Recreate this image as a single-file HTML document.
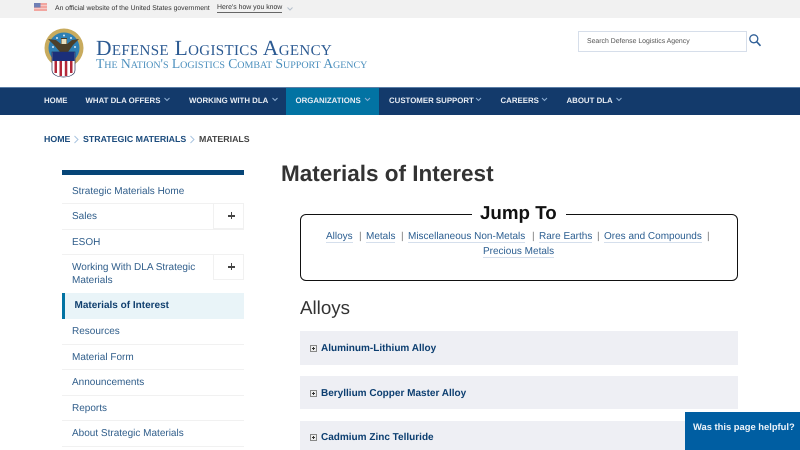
<!DOCTYPE html>
<html lang="en">
<head>
<meta charset="utf-8">
<style>
html,body{margin:0;padding:0}
body{width:800px;height:450px;position:relative;overflow:hidden;background:#fff;font-family:"Liberation Sans",Arial,sans-serif;text-rendering:geometricPrecision}
.a{position:absolute;white-space:nowrap}
a{color:inherit;text-decoration:none}
.nav{font-weight:bold;font-size:7.850px;color:#e8edf4;top:95px;line-height:11px}
.side{font-size:10px;color:#2f5d8a;left:72px;line-height:14px}
.line{position:absolute;left:62px;width:182px;height:1px;background:#f1f1f1}
.acc{position:absolute;left:300px;width:438px;background:#eeeff4}
.acc b{position:absolute;left:21px;font-size:10px;color:#0c3e70;white-space:nowrap;line-height:14px}
.acc i{position:absolute;left:10px;width:5px;height:5px;border:1px solid #888;background:#eee}
.acc i:after{content:"";position:absolute;left:1px;top:2px;width:3px;height:1px;background:#333}
.acc i:before{content:"";position:absolute;left:2px;top:1px;width:1px;height:3px;background:#333}
.plus{position:absolute;left:213px;width:31px;height:26px;border:1px solid #f1f1f1;box-sizing:border-box}
.plus:before{content:"";position:absolute;left:14px;top:11px;width:7px;height:1.6px;background:#444}
.plus:after{content:"";position:absolute;left:16.7px;top:8.3px;width:1.6px;height:7px;background:#444}
.j{color:#2a5d90;border-bottom:1px solid #d5dfec}
.l{font-size:10px;line-height:15px;top:229px}
.sep{color:#777}
.bc{top:133px;font-size:8.800px;line-height:12px;font-weight:bold;color:#1a4a7c}
</style>
</head>
<body>
<div class="a" style="left:0;top:0;width:800px;height:18px;background:#f1f1f1"></div>
<svg class="a" style="left:34px;top:3px" width="13" height="8" viewBox="0 0 13 8"><rect width="13" height="8" fill="#f2a6a0"/><rect y="2" width="13" height="1" fill="#f7c9c5"/><rect y="5" width="13" height="1" fill="#f7c9c5"/><rect width="6.500" height="4.500" fill="#6f7fb5"/></svg>
<div class="a" style="left:55px;top:4px;font-size:6.850px;line-height:10px;color:#333">An official website of the United States government</div>
<div class="a" style="left:217px;top:4px;font-size:6.900px;line-height:8px;color:#333;border-bottom:1px solid #666;height:8px">Here's how you know</div>
<svg class="a" style="left:287px;top:7px" width="6" height="4" viewBox="0 0 6 4"><path d="M.5.5 3 3 5.500.5" fill="none" stroke="#b4bfcc" stroke-width="1"/></svg>

<svg class="a" style="left:40px;top:25px" width="48" height="56" viewBox="0 0 48 56">
<circle cx="24" cy="23" r="19.500" fill="#c8ab5e"/>
<circle cx="24" cy="23" r="15.500" fill="#2f80b5"/>
<g fill="#dce9f2"><circle cx="17" cy="13" r="1"/><circle cx="24" cy="10.500" r="1"/><circle cx="31" cy="13" r="1"/><circle cx="13" cy="22" r="1"/><circle cx="35" cy="22" r="1"/><circle cx="14" cy="29" r="1"/><circle cx="34" cy="29" r="1"/><circle cx="19" cy="19" r="1"/><circle cx="29" cy="19" r="1"/></g>
<path d="M8 14 16 15 21 19 21 13 27 13 27 19 32 15 39 14 33 20 28 27 20 27 14 20z" fill="#4c3f2a"/>
<rect x="21.500" y="14" width="5" height="5" fill="#e9dfc0"/>
<path d="M12 27H35V45C35 50 29 52 23.500 52 18 52 12 50 12 45z" fill="#fff" stroke="#2a3358" stroke-width=".7"/>
<rect x="12.500" y="27" width="22" height="9" fill="#1b2f7a"/>
<path d="M14.500 36h2.500v12h-2.500zM19.500 36h2.500v15h-2.500zM24.800 36h2.500v15h-2.500zM30 36h2.500v12H30z" fill="#b3283a"/>
</svg>

<div class="a" style="left:96px;top:36.500px;font-family:'Liberation Serif',serif;font-size:21.500px;line-height:22px;color:#2c5a92;font-variant:small-caps;letter-spacing:.34px">Defense Logistics Agency</div>
<div class="a" style="left:96px;top:55.500px;font-family:'Liberation Serif',serif;font-size:13.600px;line-height:15px;color:#4b8fbd;font-variant:small-caps;letter-spacing:-.03px">The Nation's Logistics Combat Support Agency</div>

<div class="a" style="left:578px;top:31px;width:169px;height:21px;box-sizing:border-box;border:1px solid #d6deea;font-size:6.900px;line-height:19px;color:#555;padding-left:8px">Search Defense Logistics Agency</div>
<svg class="a" style="left:748px;top:33px" width="14" height="14" viewBox="0 0 14 14"><circle cx="5.800" cy="5.800" r="4" fill="none" stroke="#2f5f97" stroke-width="1.300"/><path d="M8.800 8.800 12.500 12.800" stroke="#2f5f97" stroke-width="1.600" fill="none"/></svg>

<div class="a" style="left:0;top:87px;width:800px;height:28px;background:#133a6b;border-top:1px solid #5b7ea6;box-sizing:border-box"></div>
<div class="a" style="left:286px;top:88px;width:93px;height:27px;background:#0273a3"></div>
<div class="a nav" style="left:44px">HOME</div>
<div class="a nav" style="left:85.500px">WHAT DLA OFFERS</div>
<div class="a nav" style="left:189px">WORKING WITH DLA</div>
<div class="a nav" style="left:295.500px">ORGANIZATIONS</div>
<div class="a nav" style="left:389px">CUSTOMER SUPPORT</div>
<div class="a nav" style="left:500.500px">CAREERS</div>
<div class="a nav" style="left:566.500px">ABOUT DLA</div>
<svg class="a" style="left:0;top:96px" width="800" height="8" viewBox="0 0 800 8"><g fill="none" stroke="#8fb0d4" stroke-width="1"><path d="M164.500 2 167 4.500 169.500 2M272.500 2 275 4.500 277.500 2M365 2 367.500 4.500 370 2M476 2 478.500 4.500 481 2M542 2 544.500 4.500 547 2M616.500 2 619 4.500 621.500 2"/></g></svg>

<div class="a bc" style="left:44px">HOME</div>
<svg class="a" style="left:73px;top:135px" width="7" height="9" viewBox="0 0 7 9"><path d="M1.500 1 5 4.500 1.500 8" fill="none" stroke="#a9c4e0" stroke-width="1"/></svg>
<div class="a bc" style="left:83px">STRATEGIC MATERIALS</div>
<svg class="a" style="left:189px;top:135px" width="7" height="9" viewBox="0 0 7 9"><path d="M1.500 1 5 4.500 1.500 8" fill="none" stroke="#a9c4e0" stroke-width="1"/></svg>
<div class="a bc" style="left:199px;color:#444">MATERIALS</div>

<div class="a" style="left:62px;top:170px;width:182px;height:5px;background:#064577"></div>
<div class="a side" style="top:184.500px"><a>Strategic Materials Home</a></div>
<div class="line" style="top:203px"></div>
<div class="a side" style="top:209.500px">Sales</div>
<div class="plus" style="top:203px"></div>
<div class="line" style="top:229px"></div>
<div class="a side" style="top:235.500px">ESOH</div>
<div class="line" style="top:254px"></div>
<div class="a side" style="top:261px;line-height:13px">Working With DLA Strategic<br>Materials</div>
<div class="plus" style="top:254px"></div>
<div class="a" style="left:62px;top:293px;width:182px;height:26px;background:#e9f4f8"></div>
<div class="a" style="left:62px;top:293px;width:3px;height:26px;background:#0273a3"></div>
<div class="a" style="left:74.500px;top:299px;font-size:10px;line-height:14px;font-weight:bold;color:#103f6e">Materials of Interest</div>
<div class="a side" style="top:325px">Resources</div>
<div class="line" style="top:344px"></div>
<div class="a side" style="top:350.500px">Material Form</div>
<div class="line" style="top:369px"></div>
<div class="a side" style="top:376px">Announcements</div>
<div class="line" style="top:395px"></div>
<div class="a side" style="top:401.500px">Reports</div>
<div class="line" style="top:420px"></div>
<div class="a side" style="top:427px">About Strategic Materials</div>
<div class="line" style="top:446px"></div>

<div class="a" style="left:281px;top:159.500px;font-size:22.500px;line-height:28px;font-weight:bold;color:#333">Materials of Interest</div>

<div class="a" style="left:300px;top:214px;width:438px;height:67px;box-sizing:border-box;border:1.500px solid #111;border-radius:6px"></div>
<div class="a" style="left:472px;top:200px;width:94px;height:24px;background:#fff"></div>
<div class="a" style="left:480px;top:200.500px;font-size:18.750px;line-height:23px;font-weight:bold;color:#111">Jump To</div>
<div class="a l" style="left:326px"><a class="j">Alloys</a></div>
<div class="a l sep" style="left:359px">|</div>
<div class="a l" style="left:366px"><a class="j">Metals</a></div>
<div class="a l sep" style="left:401px">|</div>
<div class="a l" style="left:408px"><a class="j">Miscellaneous Non-Metals</a></div>
<div class="a l sep" style="left:532px">|</div>
<div class="a l" style="left:539px"><a class="j">Rare Earths</a></div>
<div class="a l sep" style="left:597px">|</div>
<div class="a l" style="left:604px"><a class="j">Ores and Compounds</a></div>
<div class="a l sep" style="left:707px">|</div>
<div class="a l" style="left:483px;top:244px"><a class="j">Precious Metals</a></div>

<div class="a" style="left:300px;top:296px;font-size:18.750px;line-height:24px;color:#333">Alloys</div>

<div class="acc" style="top:331px;height:34px"><i style="top:14px"></i><b style="top:10.500px">Aluminum-Lithium Alloy</b></div>
<div class="acc" style="top:376px;height:33px"><i style="top:14px"></i><b style="top:10.500px">Beryllium Copper Master Alloy</b></div>
<div class="acc" style="top:421px;height:29px"><i style="top:13px"></i><b style="top:9.500px">Cadmium Zinc Telluride</b></div>

<div class="a" style="left:685px;top:412px;width:115px;height:38px;background:#005ea2"></div>
<div class="a" style="left:693px;top:420px;font-size:9.400px;line-height:13px;font-weight:bold;color:#eef4fa">Was this page helpful?</div>
</body>
</html>
